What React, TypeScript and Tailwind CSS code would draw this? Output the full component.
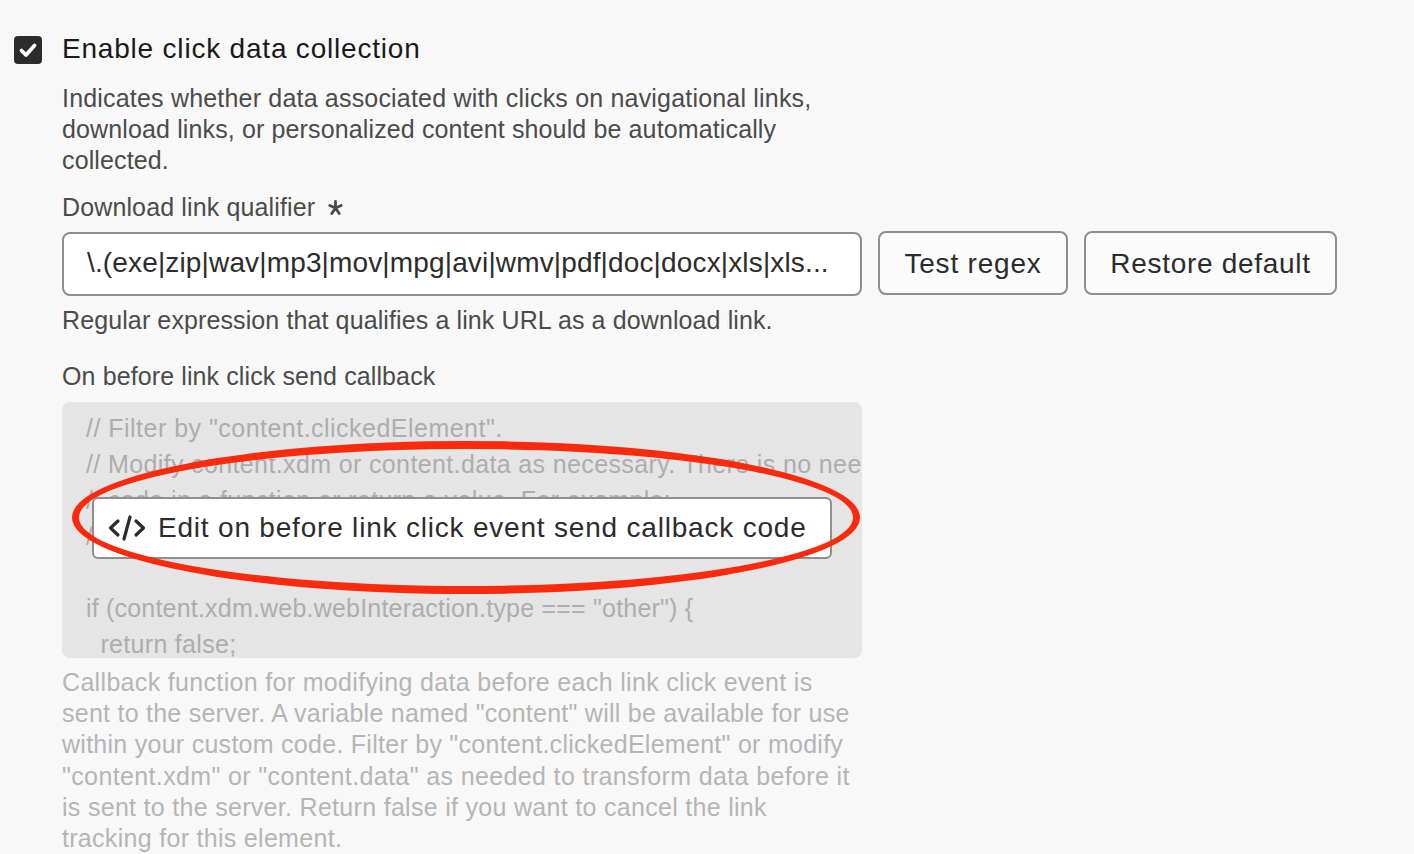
export default function App() {
  const font = { fontFamily: '"Liberation Sans", Arial, sans-serif' };
  const codeLines = [
    { text: '// Filter by "content.clickedElement".', cls: 'tracking-[0.48px]' },
    { text: '// Modify content.xdm or content.data as necessary. There is no need to wrap the', cls: 'tracking-[0.37px]' },
    { text: '// code in a function or return a value. For example:', cls: 'tracking-[0.37px]' },
    { text: '// Example comment line', cls: 'tracking-[0.37px]' },
    { text: '', cls: '' },
    { text: 'if (content.xdm.web.webInteraction.type === "other") {', cls: 'tracking-[0.2px]' },
    { text: '  return false;', cls: 'tracking-[0.3px]' },
  ];
  const helpLines = [
    { text: 'Callback function for modifying data before each link click event is', cls: 'tracking-[0.33px]' },
    { text: 'sent to the server. A variable named "content" will be available for use', cls: 'tracking-[0.25px]' },
    { text: 'within your custom code. Filter by "content.clickedElement" or modify', cls: 'tracking-[0.27px]' },
    { text: '"content.xdm" or "content.data" as needed to transform data before it', cls: 'tracking-[0.37px]' },
    { text: 'is sent to the server. Return false if you want to cancel the link', cls: 'tracking-[0.3px]' },
    { text: 'tracking for this element.', cls: 'tracking-[0.3px]' },
  ];
  return (
    <div className="relative h-[854px] w-[1414px] overflow-hidden bg-[#f8f8f8] pl-[14px] pt-[31px] text-[#4b4b4b]" style={font}>
      <div className="flex items-center gap-[20px]">
        <div className="mt-[2px] flex h-[28px] w-[28px] items-center justify-center rounded-[4px] bg-[#2c2c2c]">
          <svg width="28" height="28" viewBox="0 0 28 28" fill="none">
            <path d="M7.5 14.5L12 19L20.5 9.5" stroke="#fff" strokeWidth="3.8" strokeLinecap="round" strokeLinejoin="round" />
          </svg>
        </div>
        <span className="text-[28px] leading-[36px] tracking-[0.8px] text-[#1a1a1a]">Enable click data collection</span>
      </div>

      <div className="pl-[48px]">
        <div className="mt-[16px] text-[25px] leading-[31px]">
          <div className="tracking-[0.19px]">Indicates whether data associated with clicks on navigational links,</div>
          <div className="tracking-[0.13px]">download links, or personalized content should be automatically</div>
          <div className="tracking-[0.13px]">collected.</div>
        </div>
        <div className="mt-[16px] flex items-center text-[25px] leading-[31px] tracking-[0.13px]">
          Download link qualifier
          <svg className="ml-[13px]" width="15" height="15" viewBox="0 0 15 15" stroke="#4b4b4b" strokeWidth="2.8" strokeLinecap="round">
            <path d="M7.5 1.5V8M7.5 8L1.8 5.5M7.5 8L13.2 5.5M7.5 8L3.8 13.5M7.5 8L11.2 13.5" />
          </svg>
        </div>
        <div className="mt-[8px] flex items-center gap-[16px] text-[28px]">
          <div className="flex h-[64px] w-[800px] items-center rounded-[8px] border-2 border-[#8e8e8e] bg-white pb-[2px] pl-[23px] pr-[28px] tracking-[0.15px] text-[#2c2c2c]">
            <span className="block whitespace-nowrap">{'\\.(exe|zip|wav|mp3|mov|mpg|avi|wmv|pdf|doc|docx|xls|xls...'}</span>
          </div>
          <button className="mb-[2px] h-[64px] w-[190px] rounded-[8px] border-2 border-[#8e8e8e] bg-[#fbfbfb] pt-[2px] tracking-[0.8px] text-[#2c2c2c]">Test regex</button>
          <button className="mb-[2px] h-[64px] w-[253px] rounded-[8px] border-2 border-[#8e8e8e] bg-[#fbfbfb] pt-[2px] tracking-[0.7px] text-[#2c2c2c]">Restore default</button>
        </div>
        <p className="mt-[8px] text-[25px] leading-[31px] tracking-[0.11px]">Regular expression that qualifies a link URL as a download link.</p>
        <div className="mt-[25px] text-[25px] leading-[31px] tracking-[0.11px]">On before link click send callback</div>

        <div className="relative mt-[10px] h-[256px] w-[800px] overflow-hidden rounded-[8px] bg-[#e5e5e5] pl-[24px] pt-[8px] text-[25px] leading-[36px] text-[#adadad]">
          {codeLines.map((l, i) => (
            <div key={i} className={`h-[36px] whitespace-pre ${l.cls}`}>{l.text}</div>
          ))}
          <div className="absolute left-[30px] top-[95px] flex h-[62px] w-[740px] items-center gap-[12px] rounded-[6px] border-2 border-[#8e8e8e] bg-white pl-[14px] text-[28px] tracking-[0.8px] text-[#2c2c2c]">
            <svg width="38" height="32" viewBox="0 0 38 32" fill="none" stroke="#2c2c2c" strokeWidth="3.2" strokeLinecap="round" strokeLinejoin="round">
              <path d="M10 9L2.5 16L10 23M28 9L35.5 16L28 23M22 5L16 27" />
            </svg>
            Edit on before link click event send callback code
          </div>
        </div>

        <div className="mt-[9px] text-[25px] leading-[31.2px] text-[#b5b5b5]">
          {helpLines.map((l, i) => (
            <div key={i} className={`whitespace-nowrap ${l.cls}`}>{l.text}</div>
          ))}
        </div>
      </div>

      <svg className="pointer-events-none absolute left-0 top-0" width="1414" height="854" viewBox="0 0 1414 854">
        <path
          fillRule="evenodd"
          fill="#fb2a0c"
          d="M72 517.5A394 76.5 0 1 0 860 517.5A394 76.5 0 1 0 72 517.5ZM79 517.5A387 68.5 0 1 1 853 517.5A387 68.5 0 1 1 79 517.5Z"
        />
      </svg>
    </div>
  );
}
